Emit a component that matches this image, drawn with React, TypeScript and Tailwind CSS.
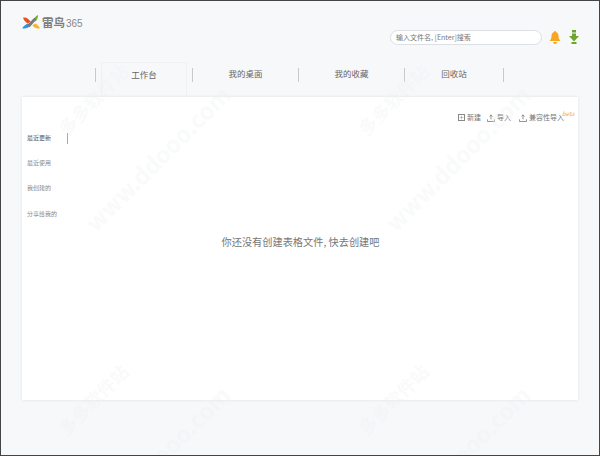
import { Plus } from 'lucide-react';

const font = { fontFamily: '"Noto Sans CJK SC", sans-serif' };

const tabs = ['工作台', '我的桌面', '我的收藏', '回收站'];
const sideItems = ['最近更新', '最近使用', '我创建的', '分享给我的'];

// site watermark repeats on a 300px tile
const tileOrigins = [
  [0, 0],
  [300, 0],
  [0, 300],
  [300, 300],
];

function Logo() {
  return (
    <svg width="18" height="15" viewBox="0 0 19 16">
      <path d="M1 3 C4 2 7 4 9 7 L6 9 C4 8 2 6 1 3Z" fill="#e8501f" />
      <path d="M12 5 C13 3 15 1 17 0 C17 3 16 5 14 7Z" fill="#6cb52d" />
      <path d="M0 14 C2 11 4 10 6 9 L8 12 C6 14 3 15 0 14Z" fill="#2a9be0" />
      <path d="M11 11 L14 9 C16 10 18 12 19 14 C16 15 13 14 11 11Z" fill="#f7b52c" />
      <path d="M5 11 L13 3 L15 5 L8 13Z" fill="#77787b" />
    </svg>
  );
}

function BellIcon() {
  return (
    <svg width="12" height="13" viewBox="0 0 12 13" fill="#f6a623">
      <circle cx="6" cy="1" r="1" />
      <path d="M6 1 C3.5 1 2.5 3 2.5 5 C2.5 7.5 1.5 9 0.5 10 H11.5 C10.5 9 9.5 7.5 9.5 5 C9.5 3 8.5 1 6 1Z" />
      <path d="M4 11 H8 C8 12.3 7 13 6 13 C5 13 4 12.3 4 11Z" />
    </svg>
  );
}

function Arrow() {
  return (
    <svg width="10" height="14" viewBox="0 0 10 14" fill="#6ea52c">
      <rect x="3" y="0" width="4" height="2.5" />
      <path d="M3 3.5 H7 V6 H10 L5 11.5 L0 6 H3Z" />
      <rect x="2.5" y="12" width="5" height="2" />
    </svg>
  );
}

function ImportIcon() {
  return (
    <svg width="8" height="8" viewBox="0 0 9 9" fill="none" stroke="#777" strokeWidth="0.9">
      <path d="M4.5 6 V1 M2.8 2.6 L4.5 1 L6.2 2.6 M0.5 6 V8.4 H8.5 V6" />
    </svg>
  );
}

export default function App() {
  return (
    <div
      className="relative w-[600px] h-[456px] overflow-hidden bg-[#f7f8fa] border border-[#444] flex flex-col"
      style={font}
    >
      <header className="h-[61px] shrink-0 flex justify-between pl-[21px] pr-[20px]">
        <div className="flex items-center gap-[1px] h-[43px]">
          <Logo />
          <span className="text-[11.5px] leading-none font-bold text-[#7d7d7d] ml-[1px]">雷鸟</span>
          <span className="text-[10px] leading-none text-[#888] mt-[3px] font-['Liberation_Sans',sans-serif]">365</span>
        </div>
        <div className="flex items-center gap-[7px] pt-[12px] h-[60px]">
          <div className="w-[152px] h-[15px] rounded-full bg-white border border-[#dcdfe3] pl-[5px] flex items-center text-[7px] text-[#777]">
            输入文件名, [Enter]搜索
          </div>
          <BellIcon />
          <div className="ml-[1px]">
            <Arrow />
          </div>
        </div>
      </header>

      <nav className="h-[35px] shrink-0 flex pl-[94px]">
        <div className="w-px h-[14px] mt-[6px] bg-[#c9c9c9]" />
        {tabs.map((tab, i) => (
          <div key={tab} className="flex">
            <div
              className={`${i === 0 ? 'w-[86px] ml-[5px] mr-[5px] border border-b-0 border-[#f0f1f3]' : i === 3 ? 'w-[98px]' : 'w-[105px]'} flex items-start pt-[4px] justify-center text-[8.5px] leading-[14px] text-[#666]`}
            >
              {tab}
            </div>
            <div className="w-px h-[14px] mt-[6px] bg-[#c9c9c9]" />
          </div>
        ))}
      </nav>

      <main className="w-[556px] h-[303px] ml-[21px] bg-white shadow-[0_0_3px_rgba(0,0,0,0.1)] flex flex-col">
        <div className="flex justify-end items-center h-[40px] pr-[14px] pt-[1px] text-[7px] text-[#777]">
          <div className="flex items-center gap-[2px] mr-[6px]">
            <Plus size={7} className="border border-[#888]" />
            新建
          </div>
          <div className="flex items-center gap-[2px] mr-[8px]">
            <ImportIcon />
            导入
          </div>
          <div className="flex items-center gap-[2px] relative">
            <ImportIcon />
            兼容性导入
            <span className="absolute left-[43px] -top-[1px] text-[6px] leading-none text-[#f5a04a] italic">beta</span>
          </div>
        </div>
        <div className="flex flex-1">
          <ul className="w-[40px] ml-[5px] flex flex-col -mt-[4px]">
            {sideItems.map((item, i) => (
              <li
                key={item}
                className={`h-[25.2px] text-[6px] leading-[10px] whitespace-nowrap ${i === 0 ? 'text-[#555]' : 'text-[#888]'}`}
              >
                {item}
              </li>
            ))}
          </ul>
          <div className="w-px h-[11px] -mt-[4px] bg-[#aaa]" />
          <div className="flex-1 flex justify-center pt-[97px] pr-[45px]">
            <p className="text-[10.2px] leading-[16px] text-[#777]">你还没有创建表格文件, 快去创建吧</p>
          </div>
        </div>
      </main>

      {tileOrigins.map(([ox, oy]) => (
        <div key={`${ox}-${oy}`}>
          <span
            className="absolute h-[24px] text-[18px] leading-[24px] font-bold text-[#eceef0]/30 whitespace-nowrap -rotate-45 pointer-events-none origin-left"
            style={{ left: 60 + ox, top: 118 + oy }}
          >
            多多软件站
          </span>
          <span
            className="absolute h-[24px] text-[23px] leading-[24px] font-bold text-[#eceef0]/30 whitespace-nowrap -rotate-45 pointer-events-none origin-left"
            style={{ left: 88 + ox, top: 213 + oy }}
          >
            www.ddooo.com
          </span>
        </div>
      ))}
    </div>
  );
}
